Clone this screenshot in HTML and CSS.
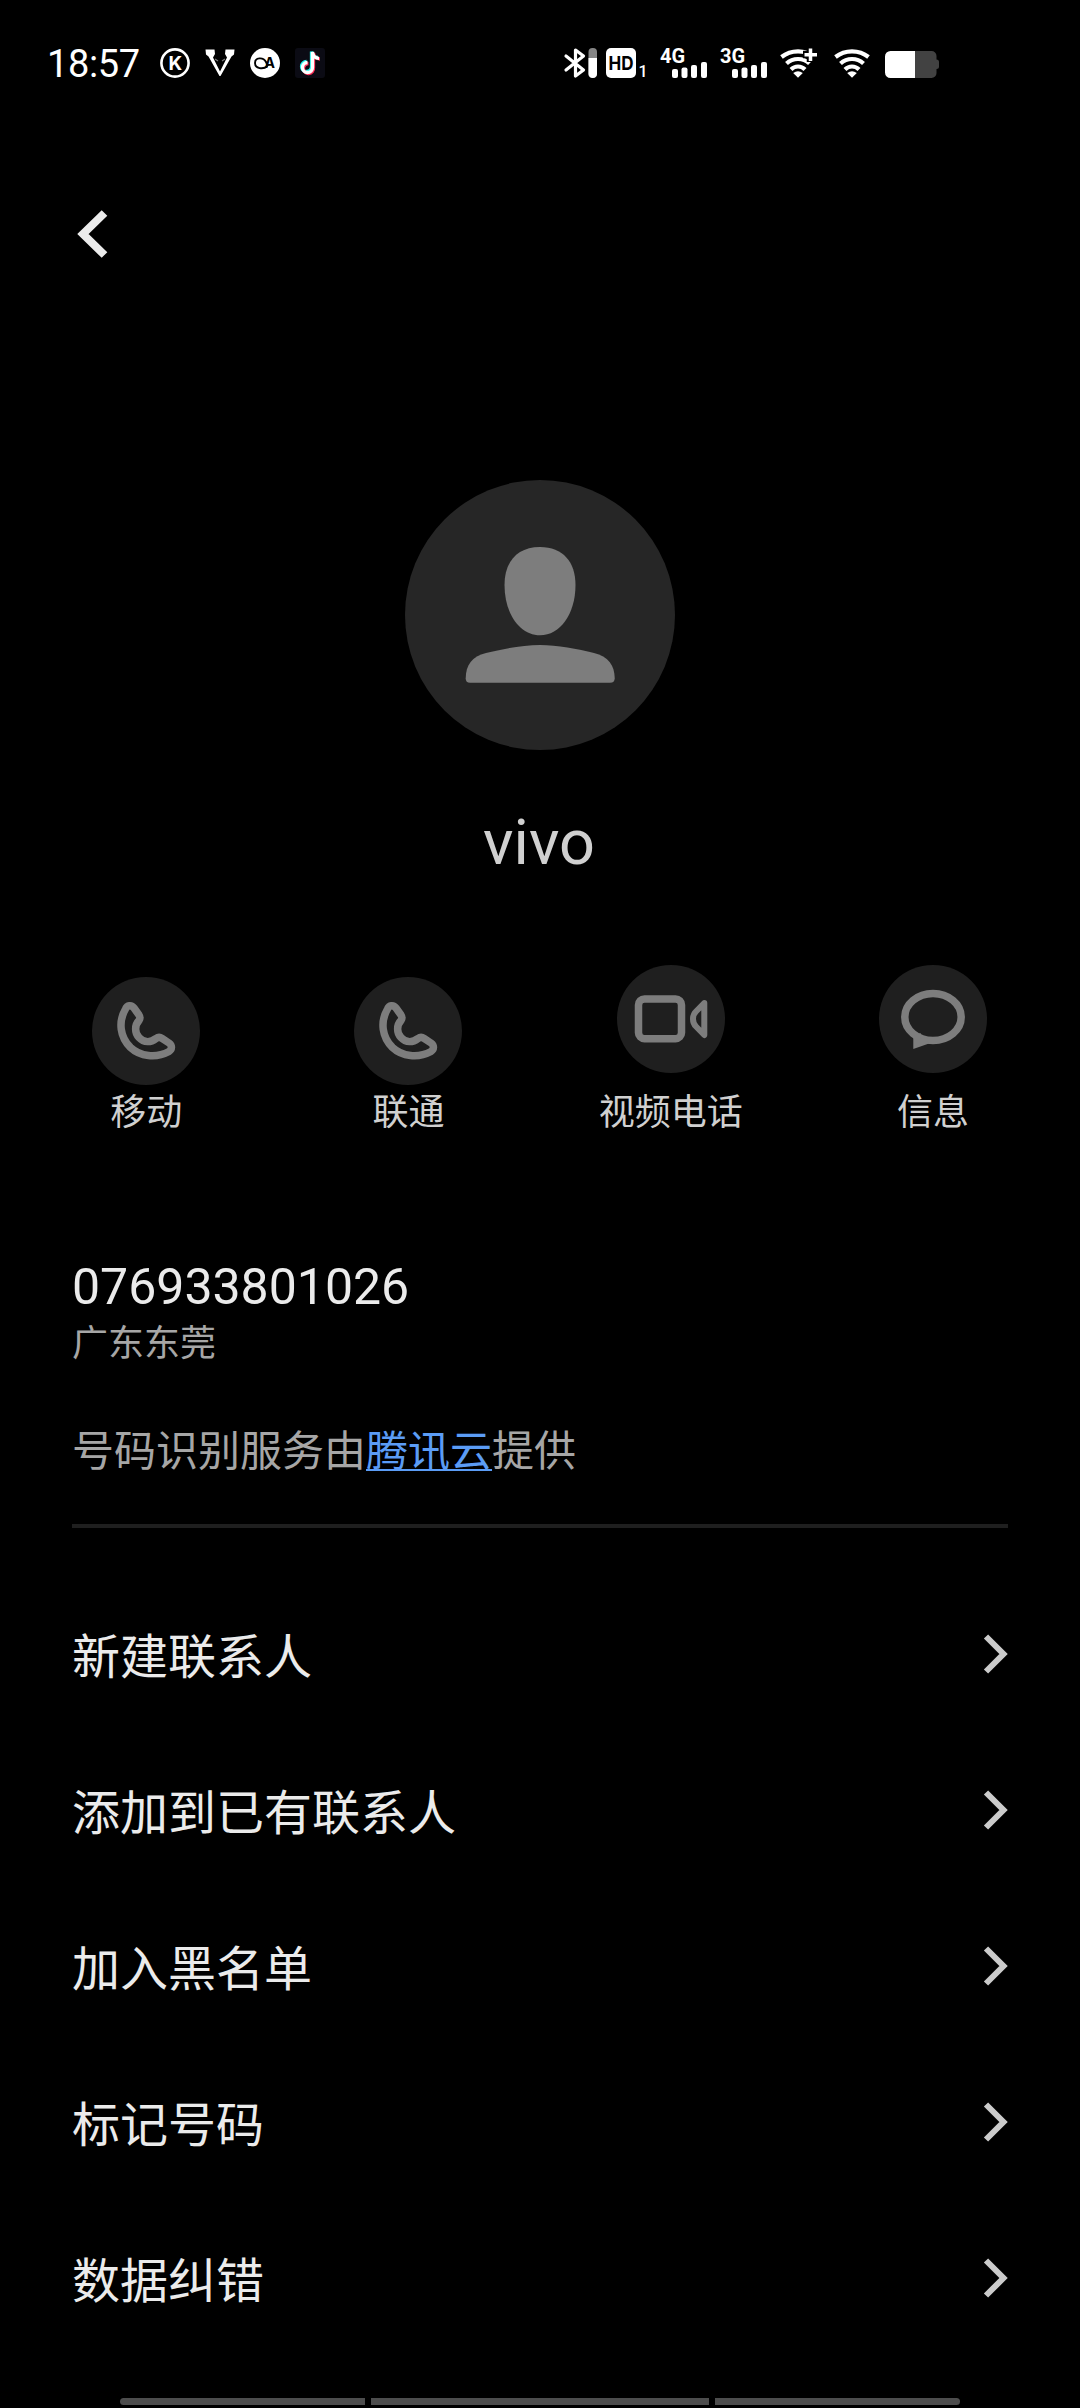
FILE: index.html
```html
<!DOCTYPE html>
<html lang="zh-CN">
<head>
  <meta charset="UTF-8" />
  <title>联系人详情</title>
  <meta name="viewport" content="width=device-width, initial-scale=1" />
  <link rel="stylesheet" href="styles.css">
</head>

<body>
  <!-- Status bar -->
  <header class="status-bar">
    <div class="status-left">
      <span class="clock">18:57</span>
      <svg class="app-icon" viewBox="0 0 30 30">
        <circle cx="15" cy="15" r="13.6" fill="none" stroke="#fff" stroke-width="2.6"/>
        <text class="k-text" x="15.3" y="22" text-anchor="middle">K</text>
      </svg>
      <svg class="app-icon" viewBox="0 0 30 30">
        <path d="M.5 1.5H9.5L10 6 8 9.500 15 23.500 22 9.500 20 6 20.500 1.500H29.500L29 6.500 26.500 8.500 15.500 28H14.500L3.500 8.500 1 6.500Z" fill="#fff"/>
        <path d="M10 11l3 2M20 11l-3 2" stroke="#777" stroke-width="1.200"/>
      </svg>
      <svg class="app-icon" viewBox="0 0 30 30">
        <circle cx="15" cy="15" r="15" fill="#fff"/>
        <path d="M17.500 18C13 22 5 20.500 5 15S13 8.500 16 14L18 18" fill="none" stroke="#000" stroke-width="1.900"/>
        <text class="ca-text" x="14.500" y="20">A</text>
      </svg>
      <svg class="app-icon" viewBox="0 0 30 30">
        <rect width="30" height="30" rx="3" fill="#0b0b14"/>
        <g fill="none" stroke-width="3.300">
          <path d="M11.500 13.500A5 5 0 1 0 16.500 19V3.500C17 7 19.500 9.500 23 9.500" stroke="#25f4ee"/>
          <path d="M13.500 15.500A5 5 0 1 0 18.500 20V5C19 8.500 21.500 11 25 11" stroke="#fe2c55"/>
          <path d="M12.500 14.500A5 5 0 1 0 17.500 19.500V4C18 8 20.500 10.300 24 10.300" stroke="#fff"/>
        </g>
      </svg>
    </div>

    <div class="status-right">
      <svg width="34" height="30" viewBox="0 0 34 30">
        <path d="M2 8L19.500 22 11.500 28V2L19.500 8 2 22" fill="none" stroke="#fff" stroke-width="3.200" stroke-linejoin="round" stroke-linecap="round"/>
        <rect x="24.500" width="8.500" height="30" rx="4" fill="#858585"/>
        <path d="M24.500 10H33V26A4.250 4 0 0 1 24.500 26Z" fill="#fff"/>
      </svg>
      <svg class="hd" width="41" height="30" viewBox="0 0 41 30">
        <rect width="30" height="30" rx="5" fill="#fff"/>
        <text class="hd-text" x="2.500" y="22" textLength="25" lengthAdjust="spacingAndGlyphs">HD</text>
        <text class="sim-text" x="32.500" y="29">1</text>
      </svg>
      <svg class="signal" width="47" height="30" viewBox="0 0 47 30">
        <text class="net-text" x="0" y="14.500">4G</text>
        <rect x="12" y="21" width="6" height="9" rx="2"/>
        <rect x="21.500" y="19.500" width="6" height="10.500" rx="2"/>
        <rect x="31" y="17" width="6" height="13" rx="2"/>
        <rect x="41" y="14" width="6" height="16" rx="2"/>
      </svg>
      <svg class="signal" width="47" height="30" viewBox="0 0 47 30">
        <text class="net-text" x="0" y="14.500">3G</text>
        <rect x="12" y="21" width="6" height="9" rx="2"/>
        <rect x="21.500" y="19.500" width="6" height="10.500" rx="2"/>
        <rect x="31" y="17" width="6" height="13" rx="2"/>
        <rect x="41" y="14" width="6" height="16" rx="2"/>
      </svg>
      <svg class="wifi-plus" width="38" height="30" viewBox="0 0 38 30">
        <g fill="none" stroke="#fff" stroke-width="4.200">
          <path d="M1.500 9C11 1.500 25 1.500 34.500 9"/>
          <path d="M6.500 15.500C13 9.500 23 9.500 29.500 15.500"/>
          <path d="M11 21.500C15 17.500 21 17.500 25 21.500"/>
        </g>
        <path d="M13.200 25Q18 21.500 22.800 25L18 29.700Z" fill="#fff"/>
        <path d="M30.500-1V14M23 6.500H38" stroke="#000" stroke-width="7.500"/>
        <path d="M30.500 0.500V13M24.500 6.800H37" stroke="#fff" stroke-width="3.500"/>
      </svg>
      <svg class="wifi" width="36" height="30" viewBox="0 0 36 30">
        <g fill="none" stroke="#fff" stroke-width="4.200">
          <path d="M1.500 9C11 1.500 25 1.500 34.500 9"/>
          <path d="M6.500 15.500C13 9.500 23 9.500 29.500 15.500"/>
          <path d="M11 21.500C15 17.500 21 17.500 25 21.500"/>
        </g>
        <path d="M13.200 25Q18 21.500 22.800 25L18 29.700Z" fill="#fff"/>
      </svg>
      <svg class="battery" width="54" height="30" viewBox="0 0 54 30">
        <path d="M5 3H46.500A5 5 0 0 1 51.500 8V11.500A2.500 2.500 0 0 1 54 14V18.500A2.500 2.500 0 0 1 51.500 21V25A5 5 0 0 1 46.500 30H5Z" fill="#424242"/>
        <path d="M30 3H5.500A5.500 5.500 0 0 0 0 8.500V24.500A5.500 5.500 0 0 0 5.500 30H30Z" fill="#fff"/>
      </svg>
    </div>
  </header>

  <!-- Back -->
  <nav class="top-nav">
    <svg class="back" viewBox="0 0 30 48">
      <path d="M26.500 3L5 24 26.500 45" fill="none" stroke="#ebebeb" stroke-width="8"/>
    </svg>
  </nav>

  <!-- Contact -->
  <section class="profile">
    <svg class="avatar" viewBox="0 0 270 270">
      <circle cx="135" cy="135" r="135" fill="#262626"/>
      <path d="M135 67C158 67 170.500 82 170.500 105C170.500 134 155 155.300 135 155.300S99.500 134 99.500 105C99.500 82 112 67 135 67Z" fill="#7d7d7d"/>
      <path d="M135 165C152 165 173 169 189 173C203 176.500 209.700 185 209.700 198.500Q209.700 202.700 205 202.700H65Q60.700 202.700 60.700 198.500C60.700 185 67 176.500 81 173C97 169 118 165 135 165Z" fill="#7d7d7d"/>
    </svg>
    <h1 class="name">vivo</h1>
  </section>

  <!-- Quick actions -->
  <section class="actions">
    <div class="action">
      <svg class="action-icon" viewBox="0 0 108 108">
        <circle cx="54" cy="54" r="54"/>
        <path class="line" d="M33.500 32C35 28 39.500 27.500 42 31L47 38Q48.800 40.700 47 43.500C42.500 48 42.500 56 47 60.500C52 66 59 65.500 64 61.500Q67 59.300 70 61.300L77 66C80.500 68.500 80 72.500 77 74.500C64 81.500 48 79.500 38.500 70.500C28 60 26 45 33.500 32Z"/>
      </svg>
      <span>移动</span>
    </div>
    <div class="action">
      <svg class="action-icon" viewBox="0 0 108 108">
        <circle cx="54" cy="54" r="54"/>
        <path class="line" d="M33.500 32C35 28 39.500 27.500 42 31L47 38Q48.800 40.700 47 43.500C42.500 48 42.500 56 47 60.500C52 66 59 65.500 64 61.500Q67 59.300 70 61.300L77 66C80.500 68.500 80 72.500 77 74.500C64 81.500 48 79.500 38.500 70.500C28 60 26 45 33.500 32Z"/>
      </svg>
      <span>联通</span>
    </div>
    <div class="action raised">
      <svg class="action-icon" viewBox="0 0 108 108">
        <circle cx="54" cy="54" r="54"/>
        <rect class="line" x="21.500" y="34" width="43" height="39.700" rx="6"/>
        <path class="line thin" d="M87.300 38L79 46.500Q76 49.500 76 54T79 61.500L87.300 70Z"/>
      </svg>
      <span>视频电话</span>
    </div>
    <div class="action raised">
      <svg class="action-icon" viewBox="0 0 108 108">
        <circle cx="54" cy="54" r="54"/>
        <ellipse class="line" cx="54" cy="52" rx="28.200" ry="23.500"/>
        <path d="M34.300 71V84L50 78.500 47 71.500 41.700 73.500V68Z" fill="#7d7d7d"/>
      </svg>
      <span>信息</span>
    </div>
  </section>

  <!-- Number -->
  <section class="number-info">
    <div class="number">076933801026</div>
    <div class="location">广东东莞</div>
    <p class="service">号码识别服务由<a href="#">腾讯云</a>提供</p>
  </section>

  <!-- Menu -->
  <ul class="menu">
    <li><span>新建联系人</span><svg class="arrow" viewBox="0 0 24 40"><path d="M2 2.500L19.500 20 2 37.500"/></svg></li>
    <li><span>添加到已有联系人</span><svg class="arrow" viewBox="0 0 24 40"><path d="M2 2.500L19.500 20 2 37.500"/></svg></li>
    <li><span>加入黑名单</span><svg class="arrow" viewBox="0 0 24 40"><path d="M2 2.500L19.500 20 2 37.500"/></svg></li>
    <li><span>标记号码</span><svg class="arrow" viewBox="0 0 24 40"><path d="M2 2.500L19.500 20 2 37.500"/></svg></li>
    <li><span>数据纠错</span><svg class="arrow" viewBox="0 0 24 40"><path d="M2 2.500L19.500 20 2 37.500"/></svg></li>
  </ul>

  <!-- Gesture bar -->
  <footer class="gesture-bar">
    <i></i><i></i><i></i>
  </footer>
</body>
</html>
```
FILE: styles.css
```css
* {
  box-sizing: border-box;
}

body {
  margin: 0;
  height: 2408px;
  display: flex;
  flex-direction: column;
  overflow: hidden;
  background-color: #000;
  color: #ebebeb;
  font-family: Roboto, "Noto Sans CJK SC", sans-serif;
}

svg {
  display: block;
  flex-shrink: 0;
  overflow: visible;
}

/* status bar */
.status-bar {
  height: 126px;
  display: flex;
  justify-content: space-between;
  padding: 48px 141px 0 47px;
  color: #fff;
}

.status-left,
.status-right {
  display: flex;
  height: 30px;
}

.clock {
  width: 113px;
  font-size: 38px;
  line-height: 32px;
  letter-spacing: -0.4px;
}

.app-icon {
  width: 30px;
  height: 30px;
  margin-right: 15px;
}

.k-text {
  font: 700 19px Inter, sans-serif;
  fill: #fff;
}

.ca-text {
  font: 700 14px Inter, sans-serif;
  fill: #000;
}

.hd-text {
  font: 700 19px Inter, sans-serif;
  fill: #000;
}

.sim-text {
  font: 500 16px Roboto, sans-serif;
  fill: #fff;
}

.net-text {
  font: 700 20px Roboto, sans-serif;
  fill: #fff;
}

.signal { fill: #fff; margin-left: 13px; }
.hd { margin-left: 8px; }
.wifi-plus { margin-left: 13px; }
.wifi { margin-left: 16px; }
.battery { margin-left: 15px; }

/* back button */
.top-nav {
  height: 354px;
  padding: 84px 78px 0;
}

.back {
  width: 30px;
  height: 48px;
}

/* contact */
.profile {
  height: 485px;
  display: flex;
  flex-direction: column;
  align-items: center;
}

.avatar {
  width: 270px;
  height: 270px;
}

.name {
  margin: 56px 0 0;
  padding-right: 2px;
  font-size: 63px;
  font-weight: 400;
  line-height: 74px;
  color: #d0d0d0;
}

.actions {
  height: 277px;
  padding: 0 15px;
  display: grid;
  grid-template-columns: repeat(4, 262.3px);
}

.action {
  display: flex;
  flex-direction: column;
  align-items: center;
  padding-top: 12px;
  font-size: 36px;
  line-height: 56px;
  color: #d0d0d0;
}

.action-icon {
  width: 108px;
  height: 108px;
}

.action.raised {
  padding-top: 0;
}
.action.raised .action-icon {
  margin-bottom: 12px;
}

.action-icon circle {
  fill: #1f1f1f;
}

.line {
  fill: none;
  stroke: #7d7d7d;
  stroke-width: 7.5;
  stroke-linejoin: round;
}
.line.thin {
  stroke-width: 6;
}

/* number block */
.number-info {
  height: 286px;
  margin: 0 72px;
  border-bottom: 4px solid #1f1f1f;
}

.number {
  margin-top: 15px;
  font-size: 50px;
  line-height: 60px;
}

.location {
  margin-top: 1px;
  font-size: 36px;
  line-height: 52px;
  color: #a6a6a6;
}

.service {
  margin: 52px 0 0;
  font-size: 42px;
  line-height: 60px;
  color: #a6a6a6;
}

.service a {
  color: #5b9cf5;
  text-decoration-thickness: 2px;
  text-underline-offset: 3px;
}

/* menu */
.menu {
  list-style: none;
  margin: 48px 72px 0;
  padding: 0;
}

.menu li {
  height: 156px;
  display: flex;
  align-items: center;
  justify-content: space-between;
  font-size: 48px;
}
.menu span {
  padding-bottom: 3px;
}

.arrow {
  width: 24px;
  height: 40px;
}
.arrow path {
  fill: none;
  stroke: #cbcbcb;
  stroke-width: 6;
}

/* gesture bar */
.gesture-bar {
  display: flex;
  justify-content: space-between;
  width: 840px;
  margin: auto auto 3px;
}

.gesture-bar i {
  width: 245px;
  height: 7px;
  background-color: #4d4d4d;
}
.gesture-bar i:first-child { border-radius: 4px 0 0 4px; }
.gesture-bar i:nth-child(2) { width: 338px; }
.gesture-bar i:last-child { border-radius: 0 4px 4px 0; }
```
